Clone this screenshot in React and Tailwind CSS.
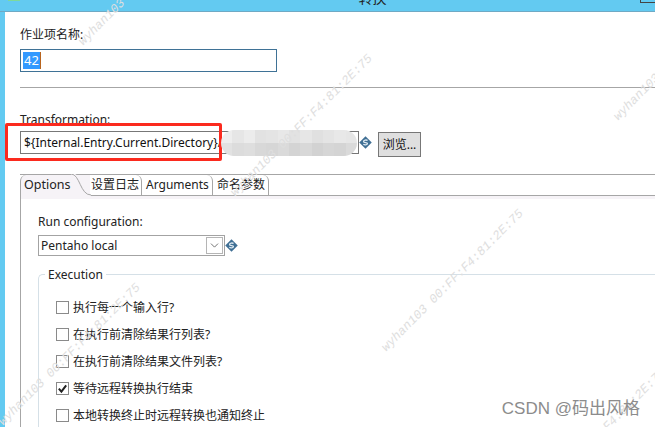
import { ChevronDown } from "lucide-react";

const FONT = "[font-family:'Noto_Sans','Noto_Sans_CJK_SC',sans-serif]";

// Diagonal watermarks: centre point of each string on the page.
const watermarks = [
  { x: 150, y: -25 },
  { x: 302, y: 126 },
  { x: 453, y: 281 },
  { x: 70, y: 355 },
  { x: 685, y: 50 },
  { x: 595, y: 440 },
];

const options = [
  { label: "执行每一个输入行?", checked: false },
  { label: "在执行前清除结果行列表?", checked: false },
  { label: "在执行前清除结果文件列表?", checked: false },
  { label: "等待远程转换执行结束", checked: true },
  { label: "本地转换终止时远程转换也通知终止", checked: false },
];

const tabs = [
  { label: "设置日志", width: "w-[52px]", pad: "pl-px" },
  { label: "Arguments", width: "w-[71px]", pad: "pl-[4px]" },
  { label: "命名参数", width: "w-[56px]", pad: "pl-[4px]" },
];

const mosaic = [
  "#eeeeee", "#e6e6e6", "#ececec", "#e2e2e2", "#e4e4e4", "#e8e8e8", "#e2e2e2", "#e6e6e6", "#e0e0e0", "#e4e4e4", "#e8e8e8", "#e6e6e6",
  "#e2e2e2", "#dcdcdc", "#dedede", "#d8d8d8", "#d6d6d6", "#dadada", "#d4d4d4", "#d8d8d8", "#d2d2d2", "#d6d6d6", "#d4d4d4", "#dadada",
];

function VarIcon({ className }) {
  return (
    <svg viewBox="0 0 14 14" className={`h-[13px] w-[13px] shrink-0 ${className}`}>
      <path d="M7 0.3 13.7 7 7 13.7 0.3 7Z" fill="#3f6f94" />
      <path d="M9.2 4.9C8 3.9 4.9 4.2 4.9 5.9 4.9 7.7 9.1 6.4 9.1 8.2 9.1 9.9 5.9 10 4.7 9" fill="none" stroke="#dfeaf2" strokeWidth="1.4" />
    </svg>
  );
}

function CheckRow({ label, checked }) {
  return (
    <div className="flex h-[27px] items-center">
      <div className="flex h-[13px] w-[13px] items-center justify-center border border-[#8a8a8a] bg-white">
        {checked && (
          <svg viewBox="0 0 12 12" className="h-[11px] w-[11px]">
            <path d="M2 6.2 4.8 9.4 10 2.6" fill="none" stroke="#222" strokeWidth="2.2" />
          </svg>
        )}
      </div>
      <span className="ml-[4px] text-[12px] text-[#222]">{label}</span>
    </div>
  );
}

export default function App() {
  return (
    <div className={`relative h-[427px] w-[655px] overflow-hidden bg-[#63caf1] ${FONT}`}>
      {/* title bar */}
      <div className="relative flex h-[12px] justify-center overflow-hidden border-b border-[#6fa9c4] pl-[90px]">
        <span className="-mt-[10px] text-[14px] leading-[16px] text-[#222]">转换</span>
        <div className="absolute right-0 top-0 h-[3px] w-[15px] border-b border-l border-[#444]" />
        <div className="absolute left-[8px] top-0 h-[1px] w-[12px] bg-[#7ed99a]" />
      </div>

      <div className="ml-[5px] h-[415px] bg-white pl-[15px] text-[#222]">
        <div className="pt-[15px] text-[12px] leading-[16px]">作业项名称:</div>
        <div className="mt-[6px] flex h-[23px] w-[257px] items-center border border-[#3f7296] px-[2px]">
          <span className="bg-[#3399ff] px-px text-[13px] leading-[17px] text-white">42</span>
          <span className="h-[17px] w-px bg-[#b8641e]" />
        </div>
        <div className="mt-[15px] h-px bg-[#a6a6a6]" />

        <div className="mt-[24px] text-[12px] leading-[16px]">Transformation:</div>
        <div className="mt-[3px] flex items-start">
          <div className="flex h-[23px] w-[339px] items-center border border-[#777] pl-[3px] text-[12px] whitespace-nowrap text-[#111]">
            {"${Internal.Entry.Current.Directory}/"}
          </div>
          <VarIcon className="mt-[5px]" />
          <button className="mt-px ml-[6px] h-[25px] w-[43px] border border-[#777] bg-[#dfdfdf] text-[12px] text-[#111]">
            浏览...
          </button>
        </div>

        {/* tab folder */}
        <div className="mt-[17px] h-[22px] pr-0">
          <div className="flex h-[22px] border-t border-b border-[#a6a6a6]">
            <div className="relative z-10 -mb-px w-[70px] shrink-0 rounded-tl-[6px] border-l border-[#a6a6a6] bg-[#f6f3f7] pl-[3px] text-[12.5px] leading-[19px]">
              Options
              <svg viewBox="0 0 20 22" className="absolute -right-px -top-px h-[22px] w-[20px]">
                <path d="M0 0H4C10 2 10 21 20 21V22H0Z" fill="#f6f3f7" />
                <path d="M0 0C9 0 9 21 20 21" fill="none" stroke="#a6a6a6" />
              </svg>
            </div>
            {tabs.map((tab) => (
              <div
                key={tab.label}
                className={`shrink-0 rounded-tr-[6px] border-r border-[#a6a6a6] text-[12px] leading-[19px] whitespace-nowrap ${tab.width} ${tab.pad}`}
              >
                {tab.label}
              </div>
            ))}
          </div>
        </div>
        <div className="h-[3px] border-l border-[#a6a6a6] bg-[#f6f3f7]" />

        {/* options panel */}
        <div className="h-[230px] border-l border-[#a6a6a6] pl-[17px]">
          <div className="pt-[15px] text-[12px] leading-[16px]">Run configuration:</div>
          <div className="mt-[5px] flex items-center">
            <div className="flex h-[21px] w-[187px] items-center justify-between border border-[#a3a3a3] pl-[2px] pr-px text-[12px]">
              Pentaho local
              <div className="flex h-[17px] w-[17px] items-center justify-center border border-[#b5b5b5]">
                <ChevronDown size={13} strokeWidth={1.5} className="text-[#555]" />
              </div>
            </div>
            <VarIcon />
          </div>

          {/* Execution group */}
          <div className="relative mt-[18px] h-[160px] rounded-tl-[5px] border-t border-l border-[#d5e0e7] pl-[17px] pt-[19px]">
            <span className="absolute -top-[8px] left-[6px] bg-white px-[3px] text-[12px] leading-[15px]">Execution</span>
            {options.map((option) => (
              <CheckRow key={option.label} label={option.label} checked={option.checked} />
            ))}
          </div>
        </div>
      </div>

      {/* red highlight drawn over the screenshot */}
      <div className="absolute left-[5px] top-[123px] h-[38px] w-[217px] rounded-[2px] border-[3px] border-[#fb2a1e]" />

      {/* pixelated blur */}
      <div className="absolute left-[221px] top-[130px] grid h-[26px] w-[136px] grid-cols-12 overflow-hidden rounded-[13px]">
        {mosaic.map((color, i) => (
          <div key={i} style={{ backgroundColor: color }} />
        ))}
      </div>

      {watermarks.map((mark) => (
        <div
          key={`${mark.x}-${mark.y}`}
          style={{ left: mark.x, top: mark.y }}
          className="pointer-events-none absolute -translate-x-1/2 -translate-y-1/2 -rotate-45 font-['Liberation_Mono'] text-[12.5px] whitespace-nowrap text-[#dedede] italic"
        >
          wyhan103 00:FF:F4:81:2E:75
        </div>
      ))}

      <div className="absolute right-[15px] top-[399px] font-['Liberation_Sans','Noto_Sans_CJK_SC',sans-serif] text-[17px] leading-[20px] text-[#8c8c8c]">
        CSDN @码出风格
      </div>
    </div>
  );
}
